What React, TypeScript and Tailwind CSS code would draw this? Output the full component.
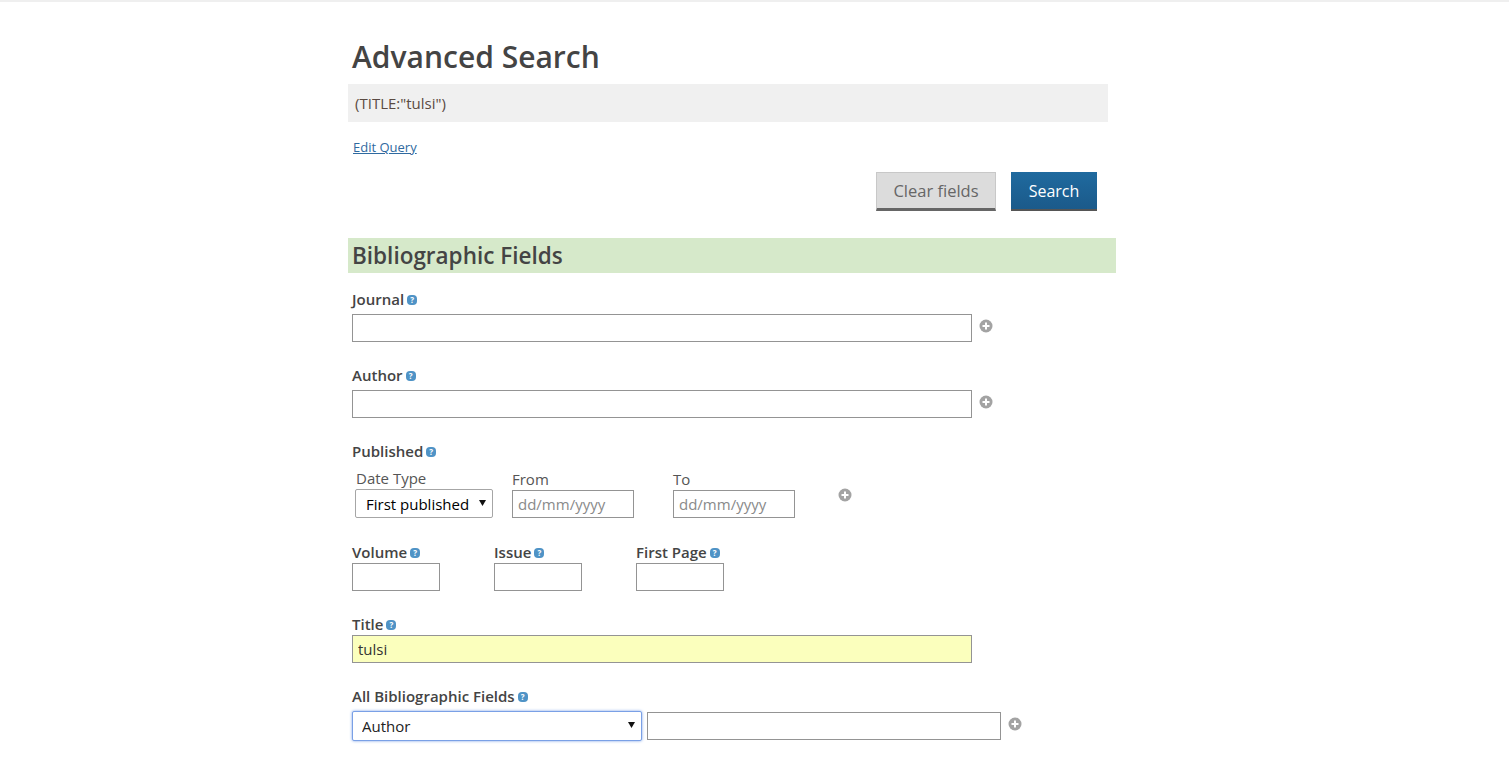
import React from 'react';

const font = { fontFamily: '"Open Sans", sans-serif' };

function Help() {
  return (
    <span className="ml-[3px] inline-flex h-[10px] w-[10px] items-center justify-center rounded-[4px] bg-[#4f93c6] text-[8px] font-bold leading-none text-white">
      ?
    </span>
  );
}

function Plus({ className = '' }: { className?: string }) {
  return (
    <svg width="14" height="14" viewBox="0 0 14 14" className={className}>
      <circle cx="7" cy="7" r="6.5" fill="#a3a3a3" />
      <path d="M7 3.5v7M3.5 7h7" stroke="#fff" strokeWidth="2" />
    </svg>
  );
}

function FieldLabel({ text, className = '' }: { text: string; className?: string }) {
  return (
    <div className={`flex h-5 items-center text-[15px] font-semibold leading-[18px] text-[#444] ${className}`}>
      <span className="mt-[-2px]">{text}</span>
      <Help />
    </div>
  );
}

// Native select with the small solid arrow of the original
function Select({ value, className, boxClass }: { value: string; className: string; boxClass: string }) {
  return (
    <div className={`relative ${boxClass}`}>
      <select defaultValue={value} className={`block w-full appearance-none rounded-[2px] bg-white pt-[1px] text-[15px] ${className}`}>
        <option>{value}</option>
      </select>
      <svg width="7" height="6" viewBox="0 0 7 6" className="pointer-events-none absolute right-[7px] top-[11px]">
        <path d="M0 0h7L3.5 6z" fill="#111" />
      </svg>
    </div>
  );
}

const inputCls = 'block h-[28px] border border-[#949494] px-[5px] text-[15px] text-[#333] outline-none placeholder:text-[#8a8a8a]';

function WideField({ label }: { label: string }) {
  return (
    <div className="mb-[24px]">
      <FieldLabel text={label} className="mb-[4px]" />
      <div className="flex items-center">
        <input className={`${inputCls} w-[620px] bg-white`} />
        <Plus className="ml-[7px] mt-[-4px]" />
      </div>
    </div>
  );
}

function SmallField({ label }: { label: string }) {
  return (
    <div className="w-[142px]">
      <FieldLabel text={label} />
      <input className={`${inputCls} w-[88px] bg-white`} />
    </div>
  );
}

export default function App() {
  return (
    <div className="min-h-[772px] border-t-2 border-[#efefef] bg-white pl-[348px]" style={font}>
      <div className="w-[768px]">
        <h1 className="h-[82px] pl-[4px] pt-[35px] text-[30px] font-semibold leading-[40px] text-[#444]">Advanced Search</h1>
        <div className="flex h-[38px] w-[760px] items-center bg-[#f0f0f0] pl-[7px] text-[15px] text-[#5a4a42]">(TITLE:"tulsi")</div>
        <div className="mt-[16px] h-[18px] pl-[5px] text-[13px] leading-[18px]">
          <a href="#" className="text-[#2f6aa0] underline">Edit Query</a>
        </div>
        <div className="mt-[16px] flex w-[749px] justify-end gap-[15px]">
          <button className="h-[39px] w-[120px] border border-b-[3px] border-[#c8c8c8] border-b-[#666] bg-[#dcdcdc] pt-[1px] text-[16.5px] text-[#666]">Clear fields</button>
          <button className="h-[39px] w-[86px] border-b-[2px] border-b-[#555] bg-linear-to-b from-[#1f6a9f] to-[#1b5a8a] text-[16px] text-white">Search</button>
        </div>
        <h2 className="mt-[27px] flex h-[35px] items-center bg-[#d6e9ca] pl-[4px] text-[22.5px] font-semibold text-[#444]">Bibliographic Fields</h2>

        <div className="pl-[4px] pt-[17px]">
          <WideField label="Journal" />
          <WideField label="Author" />

          <FieldLabel text="Published" />
          <div className="mt-[6px] flex items-end">
            <div className="ml-[3px] w-[157px]">
              <div className="mb-[1px] h-5 pl-[1px] text-[15px] leading-5 text-[#555]">Date Type</div>
              <Select
                value="First published"
                boxClass="w-[138px]"
                className="h-[29px] border border-[#a6a6a6] pl-[10px] text-black"
              />
            </div>
            <div className="w-[161px]">
              <div className="mb-[1px] h-5 text-[15px] leading-5 text-[#555]">From</div>
              <input placeholder="dd/mm/yyyy" className={`${inputCls} w-[122px] bg-white`} />
            </div>
            <div className="w-[165px]">
              <div className="mb-[1px] h-5 text-[15px] leading-5 text-[#555]">To</div>
              <input placeholder="dd/mm/yyyy" className={`${inputCls} w-[122px] bg-white`} />
            </div>
            <Plus className="mb-[16px]" />
          </div>

          <div className="mt-[25px] flex">
            <SmallField label="Volume" />
            <SmallField label="Issue" />
            <SmallField label="First Page" />
          </div>

          <div className="mt-[24px]">
            <FieldLabel text="Title" />
            <input defaultValue="tulsi" className={`${inputCls} w-[620px] bg-[#fbffbd]`} />
          </div>

          <div className="mt-[24px]">
            <FieldLabel text="All Bibliographic Fields" className="mb-[4px]" />
            <div className="flex items-center">
              <Select
                value="Author"
                boxClass="w-[290px]"
                className="h-[30px] border border-[#7aa0e6] pl-[9px] text-[#222] shadow-[0_0_3px_#7aa0e6]"
              />
              <input className={`${inputCls} ml-[5px] w-[354px] bg-white`} />
              <Plus className="ml-[7px] mt-[-4px]" />
            </div>
          </div>
        </div>
      </div>
    </div>
  );
}
